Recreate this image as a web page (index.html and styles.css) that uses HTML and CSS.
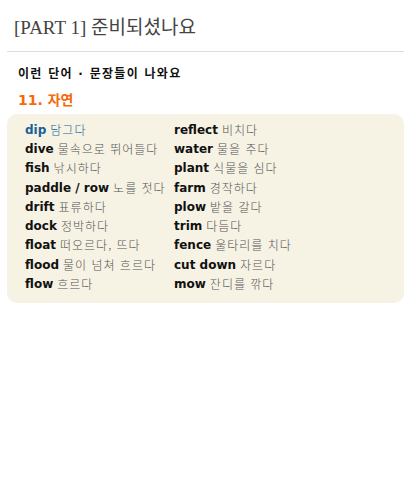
FILE: index.html
```html
<!DOCTYPE html>
<html lang="ko">
<head>
<meta charset="utf-8">
<link rel="stylesheet" href="styles.css">
</head>
<body>
<div class="page">
  <h1 class="title">[PART 1] 준비되셨나요</h1>
  <div class="sub">이런 단어 · 문장들이 나와요</div>
  <div class="topic">11. 자연</div>
  <div class="box">
    <div class="col">
      <div class="row hl"><b>dip</b> <span>담그다</span></div>
      <div class="row"><b>dive</b> <span>물속으로 뛰어들다</span></div>
      <div class="row"><b>fish</b> <span>낚시하다</span></div>
      <div class="row"><b>paddle / row</b> <span>노를 젓다</span></div>
      <div class="row"><b>drift</b> <span>표류하다</span></div>
      <div class="row"><b>dock</b> <span>정박하다</span></div>
      <div class="row"><b>float</b> <span>떠오르다, 뜨다</span></div>
      <div class="row"><b>flood</b> <span>물이 넘쳐 흐르다</span></div>
      <div class="row"><b>flow</b> <span>흐르다</span></div>
    </div>
    <div class="col">
      <div class="row"><b>reflect</b> <span>비치다</span></div>
      <div class="row"><b>water</b> <span>물을 주다</span></div>
      <div class="row"><b>plant</b> <span>식물을 심다</span></div>
      <div class="row"><b>farm</b> <span>경작하다</span></div>
      <div class="row"><b>plow</b> <span>밭을 갈다</span></div>
      <div class="row"><b>trim</b> <span>다듬다</span></div>
      <div class="row"><b>fence</b> <span>울타리를 치다</span></div>
      <div class="row"><b>cut down</b> <span>자르다</span></div>
      <div class="row"><b>mow</b> <span>잔디를 깎다</span></div>
    </div>
  </div>
</div>
</body>
</html>
```
FILE: styles.css
```css
* { box-sizing: border-box; }
body {
  margin: 0;
  background: #fff;
  font-family: "DejaVu Sans", "Noto Sans CJK KR", sans-serif;
}
.page {
  padding: 0 6px 0 7px;
}
.title {
  margin: 0;
  padding: 16px 0 0 7px;
  height: 52px;
  font-family: "Liberation Serif", "Noto Sans CJK KR", serif;
  font-weight: normal;
  font-size: 19px;
  line-height: 24px;
  color: #444;
  border-bottom: 1px solid #ddd;
}
.sub {
  margin-top: 14px;
  padding-left: 11px;
  font-size: 12px;
  font-weight: bold;
  line-height: 16px;
  letter-spacing: 1.3px;
  color: #111;
}
.topic {
  margin-top: 9px;
  padding-left: 11px;
  font-size: 14px;
  font-weight: bold;
  line-height: 18px;
  color: #f66a0a;
}
.box {
  margin-top: 5px;
  background: #f6f2e4;
  border-radius: 10px;
  padding: 6px 10px 9px 18px;
  display: grid;
  grid-template-columns: 149px 1fr;
}
.row {
  display: flex;
  align-items: center;
  gap: 4px;
  height: 19.3px;
  font-size: 12px;
  line-height: 14px;
  color: #555;
  white-space: nowrap;
}
.row b {
  color: #111;
  font-weight: bold;
}
.row span {
  font-family: "Noto Sans CJK KR", sans-serif;
  font-weight: 300;
  letter-spacing: 1px;
  line-height: 14px;
}
.row.hl, .row.hl b {
  color: #1a5f96;
}
```
